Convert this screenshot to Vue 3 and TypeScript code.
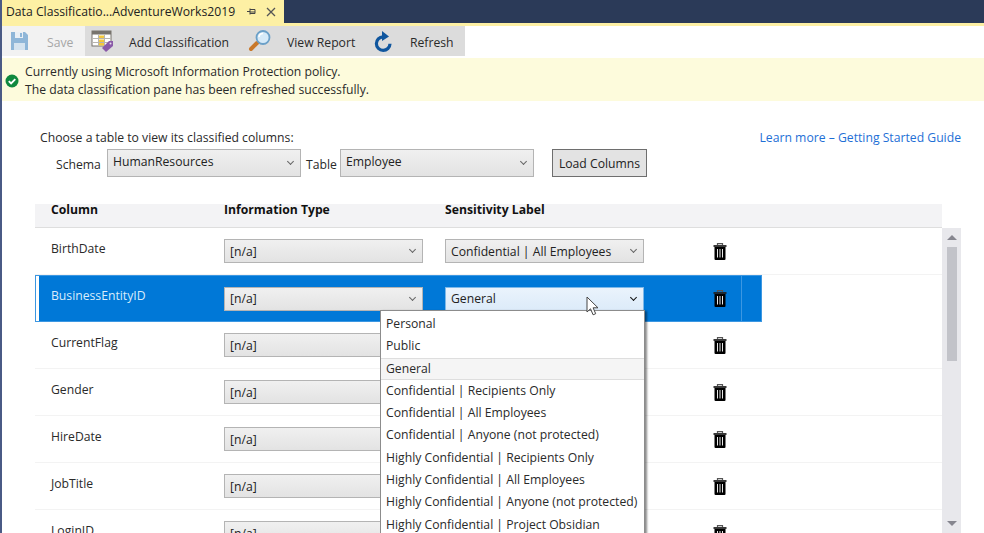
<script setup lang="ts">
const rows = [
  { name: 'BirthDate', label: 'Confidential | All Employees' },
  { name: 'BusinessEntityID', label: 'General', selected: true },
  { name: 'CurrentFlag', label: '' },
  { name: 'Gender', label: '' },
  { name: 'HireDate', label: '' },
  { name: 'JobTitle', label: '' },
  { name: 'LoginID', label: '' },
];

const options = [
  'Personal',
  'Public',
  'General',
  'Confidential | Recipients Only',
  'Confidential | All Employees',
  'Confidential | Anyone (not protected)',
  'Highly Confidential | Recipients Only',
  'Highly Confidential | All Employees',
  'Highly Confidential | Anyone (not protected)',
  'Highly Confidential | Project Obsidian',
];
</script>

<template>
  <div class="page">
    <div class="tabstrip">
      <div class="tab">
        <span class="tab-title">Data Classificatio...AdventureWorks2019</span>
        <svg class="pin" width="11" height="11" viewBox="0 0 11 11">
          <path d="M1 5.5h3M4 2.500v6M4 3.500h5v4H4M4 6h5" fill="none" stroke="#444" stroke-width="1" />
        </svg>
        <svg class="close" width="10" height="10" viewBox="0 0 10 10">
          <path d="M1 1l8 8M9 1l-8 8" stroke="#555" stroke-width="1.3" />
        </svg>
      </div>
    </div>
    <div class="tab-line"></div>

    <div class="toolbar">
      <div class="tool tool-off">
        <svg width="17" height="18" viewBox="0 0 17 18">
          <path d="M0 0h14l3 3v15H0z" fill="#8fb6d8" />
          <rect x="4" y="0" width="8" height="6" fill="#e9eff5" />
          <rect x="9" y="1" width="2" height="4" fill="#8fb6d8" />
          <rect x="3" y="11" width="11" height="7" fill="#d5e3ef" />
        </svg>
        <span class="tool-text off">Save</span>
      </div>
      <div class="tool t-add">
        <svg width="23" height="23" viewBox="0 0 23 23">
          <rect x="1" y="1" width="19" height="15" fill="#fff" stroke="#77736c" />
          <rect x="1" y="1" width="19" height="3.500" fill="#77736c" />
          <rect x="8" y="5.500" width="5" height="3" fill="#f4c93c" />
          <rect x="8" y="9.500" width="5" height="3" fill="#f4c93c" />
          <rect x="8" y="13" width="5" height="2.500" fill="#f4c93c" />
          <path d="M2 8.500h18M2 12.500h18M7.500 5v11M13.500 5v11" stroke="#b8b5ae" stroke-width="1" />
          <path d="M11 18l7-7h4v5l-7 6z" fill="#8a5aa8" />
          <circle cx="19.500" cy="13.500" r="1" fill="#e6dcec" />
        </svg>
        <span class="tool-text">Add Classification</span>
      </div>
      <div class="tool t-view">
        <svg width="24" height="24" viewBox="0 0 24 24">
          <path d="M9 14l-6 6" stroke="#c9782a" stroke-width="4" stroke-linecap="round" />
          <circle cx="15" cy="8.500" r="6.500" fill="#d6eaf8" stroke="#6ba0c8" stroke-width="1.800" />
          <path d="M11 8a4 4 0 0 1 4-3.500" fill="none" stroke="#fff" stroke-width="1.500" />
        </svg>
        <span class="tool-text">View Report</span>
      </div>
      <div class="tool t-refresh">
        <svg width="18" height="21" viewBox="0 0 18 21">
          <path d="M9 5.800a6.800 6.800 0 1 0 7 7" fill="none" stroke="#10569e" stroke-width="3.200" />
          <path d="M8 0l7 5.500-7 4.500z" fill="#10569e" />
        </svg>
        <span class="tool-text">Refresh</span>
      </div>
    </div>

    <div class="notice">
      <svg width="14" height="14" viewBox="0 0 14 14">
        <circle cx="7" cy="7" r="6.500" fill="#10893e" />
        <path d="M3.800 7.200l2.300 2.300 4.200-4.300" fill="none" stroke="#fff" stroke-width="1.900" />
      </svg>
      <div class="notice-text">
        <div>Currently using Microsoft Information Protection policy.</div>
        <div>The data classification pane has been refreshed successfully.</div>
      </div>
    </div>

    <div class="picker">
      <div class="picker-head">
        <span>Choose a table to view its classified columns:</span>
        <a class="link">Learn more – Getting Started Guide</a>
      </div>
      <div class="picker-fields">
        <span class="field-label label-schema">Schema</span>
        <div class="combo combo-schema"><span>HumanResources</span><i class="chev"></i></div>
        <span class="field-label label-table">Table</span>
        <div class="combo combo-table"><span>Employee</span><i class="chev"></i></div>
        <button class="load">Load Columns</button>
      </div>
    </div>

    <div class="grid">
      <div class="grid-head">
        <span class="col-name">Column</span>
        <span class="col-type">Information Type</span>
        <span>Sensitivity Label</span>
      </div>
      <div class="grid-body">
        <div class="rows">
          <div v-for="row in rows" :key="row.name" class="row" :class="{ selected: row.selected }">
            <span class="col-name cell-name">{{ row.name }}</span>
            <div class="combo combo-cell"><span>[n/a]</span><i class="chev"></i></div>
            <div v-if="row.label" class="combo combo-cell combo-label" :class="{ open: row.selected }">
              <span>{{ row.label }}</span><i class="chev"></i>
            </div>
            <div v-else class="combo-gap"></div>
            <svg class="trash" width="14" height="17" viewBox="0 0 14 17">
              <path d="M4.500 2V0.700h5V2" fill="none" stroke="#555" stroke-width="1.200" />
              <path d="M0.500 3h13" stroke="#222" stroke-width="1.800" />
              <path d="M1.500 4h11v12a1 1 0 0 1-1 1h-9a1 1 0 0 1-1-1z" fill="#000" />
              <path d="M4.500 6v8.500M7 6v8.500M9.500 6v8.500" stroke="#e8e8e8" stroke-width="1" />
            </svg>
            <i v-if="row.selected" class="row-bar"></i>
            <i v-if="row.selected" class="row-divider"></i>
          </div>
        </div>
        <div class="scrollbar">
          <i class="arrow-up"></i>
          <div class="thumb"></div>
          <i class="arrow-down"></i>
        </div>
      </div>
    </div>

    <ul class="dropdown">
      <li v-for="opt in options" :key="opt" :class="{ current: opt === 'General' }">{{ opt }}</li>
    </ul>

    <svg class="cursor" width="14" height="21" viewBox="0 0 14 21">
      <path d="M1 1v15l3.500-3.200 2.600 6 2.600-1.100-2.600-5.900H12z" fill="#fff" stroke="#444" stroke-width="1" />
    </svg>
  </div>
</template>

<style scoped>
.page {
  position: relative;
  width: 984px;
  height: 533px;
  overflow: hidden;
  background: #fff;
  color: #2a2a2a;
  font-family: 'Open Sans', 'Noto Sans', sans-serif;
  font-size: 12.2px;
  border-left: 2px solid #4a5a85;
  box-sizing: border-box;
}

.tabstrip {
  display: flex;
  height: 23px;
  margin-left: -2px;
  background: #2b3a58;
}

.tab {
  display: flex;
  align-items: center;
  width: 284px;
  box-sizing: border-box;
  padding-left: 6px;
  background: #fdf0a4;
  color: #222;
}

.tab-title {
  width: 240px;
  white-space: nowrap;
}

.close {
  margin-left: 9px;
}

.tab-line {
  height: 3px;
  margin-left: -2px;
  background: #fdf0a4;
}

.toolbar {
  display: flex;
  width: 463px;
  height: 30px;
  margin-bottom: 2px;
  background: #dcdcdc;
}

.tool {
  display: flex;
  align-items: center;
  height: 100%;
  box-sizing: border-box;
}

.tool-off {
  width: 83px;
  padding-left: 9px;
  background: #f2f2f2;
}

.tool-off .tool-text {
  margin-left: 19px;
}

.tool-text {
  position: relative;
  top: 1px;
  white-space: nowrap;
}

.off {
  color: #a6a6a6;
}

.t-add {
  width: 162px;
  padding-left: 6px;
}

.t-add .tool-text {
  margin-left: 15px;
}

.t-view {
  width: 125px;
  padding-left: 1px;
}

.t-view .tool-text {
  margin-left: 15px;
}

.t-refresh {
  padding-left: 2px;
}

.t-refresh .tool-text {
  margin-left: 18px;
}

.notice {
  display: flex;
  align-items: center;
  gap: 6px;
  height: 43px;
  padding: 2px 0 0 3px;
  box-sizing: border-box;
  background: #fdfbdc;
}

.notice-text {
  line-height: 18px;
  white-space: nowrap;
}

.picker {
  padding: 28px 23px 0 38px;
}

.picker-head {
  display: flex;
  justify-content: space-between;
  line-height: 18px;
}

.link {
  color: #1e6fd6;
}

.picker-fields {
  display: flex;
  align-items: center;
  height: 28px;
  margin-top: 2px;
  padding-left: 16px;
}

.field-label {
  flex: none;
  margin-top: 2px;
}

.label-schema {
  width: 51px;
}

.label-table {
  width: 34px;
  margin-left: 5px;
}

.combo {
  display: flex;
  align-items: center;
  justify-content: space-between;
  box-sizing: border-box;
  padding: 0 6px 0 5px;
  border: 1px solid #b4b4b4;
  background: linear-gradient(#f0f0f0, #e3e3e3);
  color: #222;
  white-space: nowrap;
}

.combo-schema,
.combo-table {
  flex: none;
  width: 194px;
  height: 28px;
}

.combo-schema span,
.combo-table span {
  margin-top: -4px;
}

.load {
  flex: none;
  width: 95px;
  height: 28px;
  margin-left: 18px;
  padding: 0;
  border: 1px solid #6e6e6e;
  background: #e3e3e3;
  color: #222;
  font: inherit;
}

.chev {
  flex: none;
  width: 4px;
  height: 4px;
  margin: -3px 1px 0 0;
  border-right: 1.300px solid #666;
  border-bottom: 1.300px solid #666;
  transform: rotate(45deg);
}

.grid {
  margin: 27px 0 0 33px;
  width: 926px;
}

.grid-head {
  display: flex;
  align-items: center;
  width: 907px;
  height: 24px;
  box-sizing: border-box;
  padding: 0 0 13px 16px;
  background: #f3f3f5;
  border-bottom: 1px solid #dedede;
  color: #111;
  font-weight: 700;
}

.col-name {
  width: 173px;
  flex: none;
}

.col-type {
  width: 221px;
  flex: none;
}

.grid-body {
  display: flex;
}

.rows {
  width: 907px;
}

.row {
  position: relative;
  display: flex;
  align-items: center;
  width: 907px;
  height: 47px;
  box-sizing: border-box;
  padding-left: 16px;
  border-bottom: 1px solid #f3f3f3;
}

.row.selected {
  width: 727px;
  background: #0078d7;
  border: 1px solid #3c97e2;
  padding-left: 15px;
}

.row-bar {
  position: absolute;
  top: 0;
  bottom: 0;
  left: 0;
  width: 3px;
  background: #fff;
}

.cell-name {
  margin-top: -6px;
}

.selected .cell-name {
  color: #d9ecfb;
}

.combo-cell {
  width: 199px;
  height: 24px;
  flex: none;
}

.combo-gap {
  width: 199px;
  margin-left: 22px;
  flex: none;
}

.combo-label {
  margin-left: 22px;
}

.combo-label.open {
  border-color: #7db8e8;
  background: linear-gradient(#eaf3fc, #dcebf9);
}

.combo-label.open .chev {
  border-width: 0 1.700px 1.700px 0;
  border-color: #111;
}

.trash {
  margin-left: 68.500px;
  flex: none;
}

.row-divider {
  position: absolute;
  top: 0;
  bottom: 0;
  right: 19px;
  width: 1px;
  background: #3c97e2;
}

.scrollbar {
  position: relative;
  flex: none;
  width: 19px;
  height: 306px;
  background: #e8e8ec;
}

.thumb {
  position: absolute;
  top: 19px;
  left: 5px;
  width: 10px;
  height: 114px;
  background: #c2c3c9;
}

.arrow-up,
.arrow-down {
  position: absolute;
  left: 5px;
  width: 0;
  height: 0;
  border-left: 5px solid transparent;
  border-right: 5px solid transparent;
}

.arrow-up {
  top: 7px;
  border-bottom: 5px solid #86868f;
}

.arrow-down {
  top: 293px;
  border-top: 5px solid #86868f;
}

.dropdown {
  position: absolute;
  left: 378px;
  top: 310px;
  width: 265px;
  margin: 0;
  padding: 2px 0 0;
  box-sizing: border-box;
  list-style: none;
  background: #fff;
  border: 1px solid #8c8c8c;
  box-shadow: 2px 1px 2px rgba(0, 0, 0, 0.45);
}

.dropdown li {
  height: 22.300px;
  line-height: 22px;
  padding-left: 5px;
  box-sizing: border-box;
  white-space: nowrap;
}

.dropdown li.current {
  background: #f5f5f5;
  border-top: 1px solid #dedede;
  border-bottom: 1px solid #dedede;
  line-height: 20px;
}

.cursor {
  position: absolute;
  left: 584px;
  top: 296px;
}
</style>
